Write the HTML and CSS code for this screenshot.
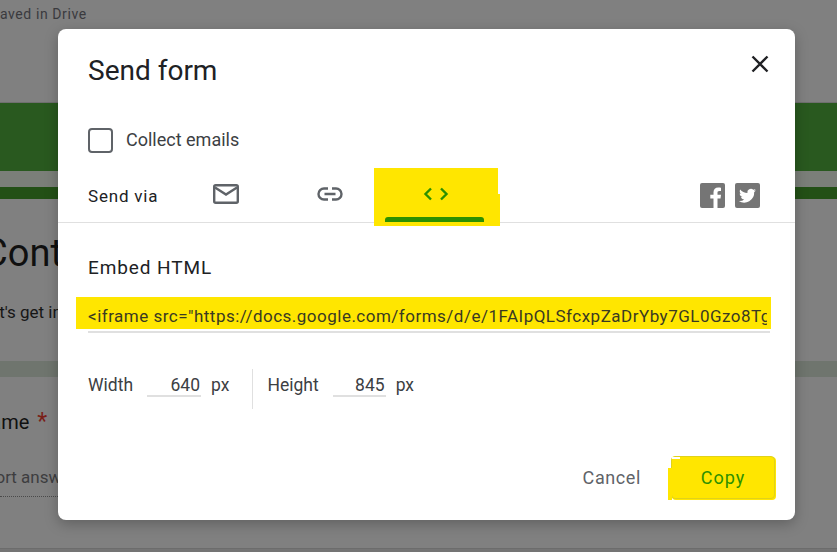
FILE: index.html
```html
<!DOCTYPE html>
<html lang="en">
<head>
<meta charset="utf-8">
<title>Send form</title>
<link rel="stylesheet" href="styles.css">
</head>
<body>
<div class="page">
  <div class="topbar"><span class="saved">Saved in Drive</span></div>
  <div class="banner"></div>
  <div class="banner-gap"></div>
  <div class="banner-foot"></div>
  <div class="intro">
    <div class="form-title">Contact</div>
    <div class="form-desc">Let's get in touch</div>
  </div>
  <div class="strip"></div>
  <div class="question">
    <div class="q-label">Name <span class="req">*</span></div>
    <div class="q-answer">Short answer</div>
    <div class="q-line"></div>
  </div>
  <div class="page-foot"></div>
</div>

<section class="dialog">
  <header class="dlg-head">
    <h1 class="dlg-title">Send form</h1>
    <svg class="close" viewBox="0 0 18 18" width="18" height="18"><path d="M1.500 1.500 16.500 16.500M16.500 1.500 1.500 16.500" fill="none" stroke="#202124" stroke-width="2.4"/></svg>
  </header>
  <div class="collect">
    <span class="checkbox"></span>
    <span class="collect-label">Collect emails</span>
  </div>
  <div class="sendvia">
    <span class="via-label">Send via</span>
    <div class="tab tab-mail">
      <svg viewBox="0 0 26 20" width="26" height="20"><rect x="1.200" y="1.200" width="23.600" height="17.600" rx="1.500" fill="none" stroke="#5f6368" stroke-width="2.4"/><path d="M2 3.500 13 10.500 24 3.500" fill="none" stroke="#5f6368" stroke-width="2.4"/></svg>
    </div>
    <div class="tab tab-link">
      <svg viewBox="0 0 26 14" width="26" height="14"><path d="M11 1.500H7a5.500 5.500 0 0 0 0 11h4M15 1.500h4a5.500 5.500 0 0 1 0 11h-4M7.500 7h11" fill="none" stroke="#5f6368" stroke-width="2.4"/></svg>
    </div>
    <div class="tab tab-embed">
      <svg viewBox="0 0 26 14" width="26" height="14"><path d="M8 1.500 2.500 7 8 12.500M18 1.500 23.500 7 18 12.500" fill="none" stroke="#2d9000" stroke-width="2.4"/></svg>
      <span class="tab-bar"></span>
    </div>
    <div class="socials">
      <svg viewBox="0 0 25 25" width="25" height="25"><rect width="25" height="25" rx="2" fill="#757575"/><path d="M17.500 25v-9.500h3l.5-3.700h-3.500V9.800c0-1.100.3-1.800 1.800-1.800H21V4.700c-.4 0-1.500-.2-2.800-.2-2.800 0-4.700 1.700-4.700 4.800v2.500h-3.200v3.700h3.200V25z" fill="#fff"/></svg>
      <svg viewBox="0 0 25 25" width="25" height="25"><rect width="25" height="25" rx="2" fill="#757575"/><path d="M21 7.300c-.6.300-1.300.5-2 .6.700-.4 1.300-1.100 1.500-1.900-.7.400-1.400.7-2.200.8A3.500 3.500 0 0 0 12.400 10c-2.900-.1-5.500-1.500-7.200-3.600-.9 1.600-.5 3.600 1.100 4.600-.6 0-1.100-.2-1.600-.4 0 1.700 1.200 3.100 2.800 3.400-.5.100-1 .2-1.600.1.400 1.400 1.700 2.400 3.300 2.400A7 7 0 0 1 3.800 18a10 10 0 0 0 15.400-8.900c.7-.4 1.300-1.100 1.800-1.800z" fill="#fff"/></svg>
    </div>
  </div>
  <div class="embed">
    <h2 class="embed-title">Embed HTML</h2>
    <div class="code-field"><div class="code">&lt;iframe src="https://docs.google.com/forms/d/e/1FAIpQLSfcxpZaDrYby7GL0Gzo8Tg5mQ</div></div>
    <div class="code-line"></div>
    <div class="sizes">
      <span class="size-label">Width</span>
      <span class="size-input size-w">640</span>
      <span class="unit">px</span>
      <span class="divider"></span>
      <span class="size-label">Height</span>
      <span class="size-input size-h">845</span>
      <span class="unit">px</span>
    </div>
  </div>
  <footer class="actions">
    <span class="cancel">Cancel</span>
    <span class="copy">Copy</span>
  </footer>
</section>
</body>
</html>
```

FILE: styles.css
```css
* { box-sizing: border-box; }
html, body { margin: 0; padding: 0; height: 100%; overflow: hidden; }
body { width: 837px; height: 552px; font-family: Roboto, "Liberation Sans", sans-serif; background: #808080; color: #202124; position: relative; }
.page { width: 837px; height: 552px; overflow: hidden; display: flex; flex-direction: column; background: #808080; }
.topbar { height: 103px; padding-top: 6px; border-bottom: 1px solid #6f6f6f; overflow: hidden; }
.saved { display: block; margin-left: -9px; font-size: 14px; line-height: 16px; color: #3a3a3e; letter-spacing: .6px; white-space: nowrap; }
.banner { height: 68px; background: #29591f; }
.banner-gap { height: 16px; background: #7b7f79; }
.banner-foot { height: 12px; background: #235016; }
.intro { height: 162px; overflow: hidden; }
.form-title { margin: 31px 0 0 -17px; font-size: 38px; line-height: 46px; color: #101010; white-space: nowrap; }
.form-desc { margin: 26px 0 0 -19px; font-size: 17px; line-height: 20px; color: #161616; white-space: nowrap; }
.strip { height: 16px; background: #6f756e; }
.question { height: 171px; overflow: hidden; }
.q-label { margin: 34px 0 0 -24px; height: 22px; font-size: 20px; line-height: 22px; color: #101010; white-space: nowrap; }
.req { color: #7a1f18; margin-left: 3px; font-size: 23px; line-height: 22px; }
.q-answer { margin-top: 34px; margin-left: -24px; font-size: 17px; line-height: 20px; color: #3d3d3f; white-space: nowrap; }
.q-line { margin-top: 9px; width: 60px; border-bottom: 1px dotted #4a4a4a; }
.page-foot { flex: 1; background: #747474; border-top: 1px solid #6c6c6c; }

.dialog { position: absolute; left: 58px; top: 29px; width: 737px; height: 491px; background: #fff; border-radius: 8px; box-shadow: 0 4px 14px rgba(0,0,0,.25); }
.dlg-head { display: flex; justify-content: space-between; align-items: center; padding: 26px 26px 0 30px; height: 57px; }
.dlg-title { margin: 0; font-size: 28px; font-weight: 400; line-height: 32px; color: #202124; }
.close { display: block; margin-bottom: 13px; }
.collect { display: flex; align-items: center; gap: 13px; padding: 0 30px; margin-top: 41px; height: 26px; }
.checkbox { width: 25px; height: 25px; border: 2.500px solid #5f6368; border-radius: 4px; }
.collect-label { font-size: 18px; line-height: 24px; color: #3c4043; }
.sendvia { display: flex; align-items: flex-start; height: 55px; margin-top: 15px; padding-left: 30px; border-bottom: 1px solid #e0e0e0; }
.via-label { margin-top: 17px; font-size: 17px; line-height: 22px; letter-spacing: .8px; color: #202124; width: 125px; white-space: nowrap; }
.tab { display: flex; justify-content: center; }
.tab-mail { width: 26px; margin-top: 16px; }
.tab-link { width: 26px; margin-left: 78px; margin-top: 19px; }
.tab-embed { flex-direction: column; justify-content: flex-start; align-items: center; width: 124px; height: 58px; margin-left: 31px; background: #ffe600; position: relative; padding: 19px 1px 0 0; }
.tab-embed::after { content: ""; position: absolute; right: -2px; top: 26px; bottom: 0; width: 2px; background: #ffe600; }
.tab-bar { position: absolute; left: 11px; bottom: 4px; width: 99px; height: 5px; background: #2d9000; border-radius: 3px 3px 0 0; }
.socials { display: flex; gap: 10px; margin-left: auto; margin-right: 35px; margin-top: 15px; }
.socials svg { display: block; }
.embed { padding: 0 24px 0 18px; }
.embed-title { margin: 33px 0 0 12px; font-size: 19px; font-weight: 400; line-height: 24px; letter-spacing: .9px; color: #202124; }
.code-field { margin-top: 17px; height: 32px; background: #ffe600; padding-left: 12px; padding-right: 4px; }
.code { height: 32px; font-size: 17px; line-height: 38px; letter-spacing: .49px; white-space: nowrap; overflow: hidden; color: #3a3a22; }
.code-line { height: 2px; background: #e0e0e0; margin: 2px 1px 0 12px; }
.sizes { display: flex; align-items: flex-start; height: 40px; margin: 36px 0 0 12px; color: #3c4043; }
.size-label { font-size: 17.500px; line-height: 24px; margin-top: 4px; }
.size-input { height: 24px; margin-top: 4px; text-align: right; border-bottom: 2px solid #e0e0e0; font-size: 17.500px; line-height: 24px; padding-right: 1px; }
.size-w { width: 54px; margin-left: 14px; }
.size-h { width: 53px; margin-left: 14px; }
.unit { margin: 4px 0 0 10px; font-size: 17.500px; line-height: 24px; }
.divider { width: 1px; height: 40px; background: #e0e0e0; margin: 0 14px 0 23px; }
.actions { display: flex; justify-content: flex-end; align-items: center; gap: 30px; margin-top: 47px; padding-right: 20px; }
.cancel { font-size: 18px; line-height: 24px; color: #5f6368; letter-spacing: .6px; }
.copy { width: 104px; height: 43px; background: #ffe600; border: 1px solid #e0d21a; border-radius: 4px; color: #2d9000; font-size: 18px; line-height: 41px; text-align: center; letter-spacing: 1px; position: relative; box-shadow: 1px 1px 0 #ffe600; }
.copy::before { content: ""; position: absolute; left: -4px; top: 11px; bottom: -2px; width: 4px; background: #ffe600; }
.copy::after { content: ""; position: absolute; left: 0; top: 0; width: 8px; height: 2px; background: #fff; }
```
